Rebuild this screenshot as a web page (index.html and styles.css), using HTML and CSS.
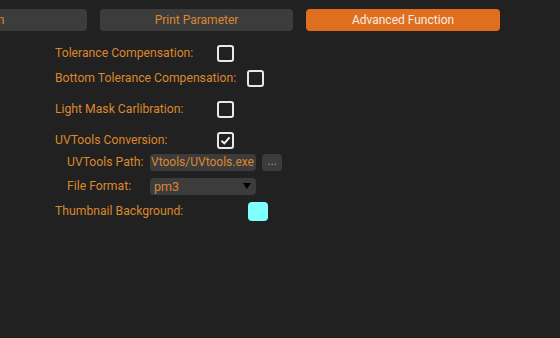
FILE: index.html
```html
<!DOCTYPE html>
<html lang="en">
<head>
  <meta charset="UTF-8">
  <title>Advanced Function</title>
  <link rel="stylesheet" href="styles.css">
</head>
<body>
  <div class="tabs">
    <div class="tab tab-first">Basic Function</div>
    <div class="tab">Print Parameter</div>
    <div class="tab active">Advanced Function</div>
  </div>

  <div class="form">
    <div class="row r1">
      <span class="label w-main">Tolerance Compensation:</span>
      <span class="check"></span>
    </div>
    <div class="row r2">
      <span class="label w-auto">Bottom Tolerance Compensation:</span>
      <span class="check"></span>
    </div>
    <div class="row r3">
      <span class="label w-main">Light Mask Carlibration:</span>
      <span class="check"></span>
    </div>
    <div class="row r4">
      <span class="label w-main">UVTools Conversion:</span>
      <span class="check checked">
        <svg width="13" height="13" viewBox="0 0 13 13"><path d="M2.5 6.8 L5.3 9.4 L10.6 3.4" fill="none" stroke="#f2f2f2" stroke-width="2"/></svg>
      </span>
    </div>
    <div class="row sub r5">
      <span class="label w-sub">UVTools Path:</span>
      <div class="input"><span>Vtools/UVtools.exe</span></div>
      <div class="browse">...</div>
    </div>
    <div class="row sub r6">
      <span class="label w-sub">File Format:</span>
      <div class="select">
        <span>pm3</span>
        <span class="arrow"></span>
      </div>
    </div>
    <div class="row r7">
      <span class="label w-thumb">Thumbnail Background:</span>
      <span class="swatch"></span>
    </div>
  </div>
</body>
</html>
```

FILE: styles.css
```css
body {
  margin: 0;
  background: #212121;
  font-family: Roboto, "Noto Sans", sans-serif;
  font-size: 12px;
  color: #dc872c;
  overflow: hidden;
  height: 338px;
}
.tabs {
  display: flex;
  gap: 13px;
  padding-top: 9px;
  margin-left: -157px;
}
.tab {
  width: 194px;
  height: 22px;
  line-height: 22px;
  text-align: center;
  background: #3c3c3c;
  border-radius: 4px;
  color: #dc872c;
  flex-shrink: 0;
}
.tab-first {
  width: 244px;
}
.tab:nth-child(2) {
  width: 193px;
}
.tab.active {
  background: #e06e1f;
  color: #f6ece2;
}
.form {
  display: flex;
  flex-direction: column;
  padding-left: 55px;
}
.row {
  display: flex;
  align-items: center;
  height: 18px;
}
.r1 { margin-top: 13px; }
.r2 { margin-top: 7px; }
.r3 { margin-top: 13px; }
.r4 { margin-top: 13px; }
.r5 { margin-top: 4px; }
.r6 { margin-top: 6px; }
.r7 { margin-top: 6px; height: 20px; }
.sub {
  padding-left: 12px;
}
.label {
  white-space: nowrap;
  font-size: 12.2px;
}
.w-main { width: 162px; }
.w-auto { margin-right: 11px; }
.w-sub { width: 83px; }
.w-thumb { width: 193px; }
.check {
  width: 17px;
  height: 17px;
  box-sizing: border-box;
  border: 2px solid #e8e8e8;
  border-radius: 3px;
  display: flex;
  align-items: center;
  justify-content: center;
}
.input {
  width: 106px;
  height: 17px;
  background: #3c3c3c;
  border-radius: 4px;
  overflow: hidden;
  display: flex;
  justify-content: flex-end;
  align-items: center;
  padding-right: 2px;
  box-sizing: border-box;
  white-space: nowrap;
  font-size: 12px;
}
.browse {
  width: 20px;
  height: 17px;
  margin-left: 6px;
  background: #3c3c3c;
  border-radius: 4px;
  text-align: center;
  line-height: 15px;
}
.select {
  width: 106px;
  height: 17px;
  background: #3c3c3c;
  border-radius: 4px;
  display: flex;
  align-items: center;
  justify-content: space-between;
  padding: 0 5px 0 4px;
  box-sizing: border-box;
  font-size: 12.5px;
}
.arrow {
  width: 0;
  height: 0;
  border-left: 4.5px solid transparent;
  border-right: 4.5px solid transparent;
  border-top: 6px solid #000;
}
.swatch {
  width: 20px;
  height: 19px;
  background: #80ffff;
  border-radius: 4px;
}
```
